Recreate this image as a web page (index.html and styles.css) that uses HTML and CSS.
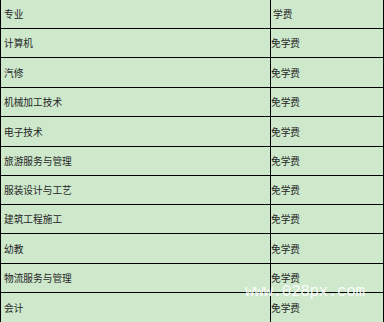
FILE: index.html
```html
<!DOCTYPE html>
<html lang="zh">
<head>
<meta charset="utf-8">
<link rel="stylesheet" href="styles.css">
</head>
<body>
<div class="table">
  <div class="row first"><div class="c1">专业</div><div class="c2 head">学费</div></div>
  <div class="row"><div class="c1">计算机</div><div class="c2">免学费</div></div>
  <div class="row tall"><div class="c1">汽修</div><div class="c2">免学费</div></div>
  <div class="row"><div class="c1">机械加工技术</div><div class="c2">免学费</div></div>
  <div class="row tall"><div class="c1">电子技术</div><div class="c2">免学费</div></div>
  <div class="row"><div class="c1">旅游服务与管理</div><div class="c2">免学费</div></div>
  <div class="row"><div class="c1">服装设计与工艺</div><div class="c2">免学费</div></div>
  <div class="row"><div class="c1">建筑工程施工</div><div class="c2">免学费</div></div>
  <div class="row tall"><div class="c1">幼教</div><div class="c2">免学费</div></div>
  <div class="row"><div class="c1">物流服务与管理</div><div class="c2">免学费</div></div>
  <div class="row tall"><div class="c1">会计</div><div class="c2">免学费</div></div>
</div>
<div class="watermark">www.028px.com</div>
</body>
</html>
```
FILE: styles.css
```css
html, body {
  margin: 0;
  padding: 0;
  background: #cde8cb;
  overflow: hidden;
}
body {
  width: 384px;
  height: 322px;
  position: relative;
  font-family: "Noto Sans CJK SC", "Noto Sans", sans-serif;
  font-size: 9.7px;
  color: #262626;
}
.table {
  display: flex;
  flex-direction: column;
  width: 384px;
  box-sizing: border-box;
  border-left: 1px solid #000;
  border-right: 1px solid #000;
}
.row {
  display: flex;
  height: 28px;
  border-top: 1px solid #000;
}
.row.first {
  border-top: none;
}
.row.tall {
  height: 29px;
}
.c1 {
  width: 270px;
  border-right: 1px solid #000;
  display: flex;
  align-items: center;
  padding-left: 3px;
  box-sizing: border-box;
}
.c2 {
  flex: 1;
  display: flex;
  align-items: center;
  padding-left: 0;
}
.c2.head {
  padding-left: 2px;
}
.watermark {
  position: absolute;
  left: 245px;
  top: 282px;
  font-family: "Liberation Mono", "DejaVu Sans Mono", monospace;
  font-size: 16px;
  letter-spacing: -0.4px;
  line-height: 20px;
  color: rgba(255, 255, 255, 0.92);
  white-space: nowrap;
}
```
